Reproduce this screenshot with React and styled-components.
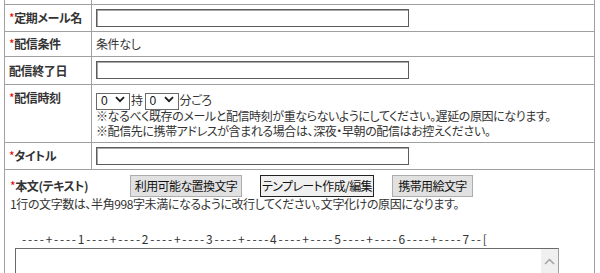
import React from "react";
import styled, { createGlobalStyle } from "styled-components";

const GlobalStyle = createGlobalStyle`
  html, body { background: #fff; }
  body {
    margin: 0 0 0 4px;
    font-family: "Noto Sans CJK JP", "Noto Sans", sans-serif;
    font-size: 12px;
    line-height: 15px;
    color: #333;
    font-feature-settings: "palt";
    letter-spacing: -0.4px;
    overflow: hidden;
  }
`;

const FormTable = styled.table`
  width: 591px;
  border-collapse: collapse;
  table-layout: fixed;
`;

const Row = styled.tr`
  height: ${(p) => p.$h}px;
`;

const Label = styled.th`
  width: 87px;
  box-sizing: border-box;
  border: 1px solid #a0a0a0;
  padding: ${(p) => (p.$top ? "5px 0 0 4px" : "0 0 0 4px")};
  text-align: left;
  vertical-align: ${(p) => (p.$top ? "top" : "middle")};
  font-weight: bold;
  color: #333;
  white-space: nowrap;
`;

const Cell = styled.td`
  border: 1px solid #a0a0a0;
  padding: ${(p) => p.$pad || "0 0 0 4px"};
  vertical-align: ${(p) => (p.$top ? "top" : "middle")};
`;

const Req = styled.span`
  color: #e60000;
  font-weight: normal;
`;

const TextInput = styled.input`
  display: block;
  box-sizing: border-box;
  width: 313px;
  height: ${(p) => p.$h || 18}px;
  margin: 0;
  border: 1px solid #5c5c5c;
  box-shadow: inset 1px 1px 0 #a8a8a8;
  padding: 0 3px;
  font: inherit;
  background: #fff;
`;

const SelectWrap = styled.span`
  position: relative;
  display: inline-block;
  vertical-align: top;
  width: 34px;
  height: 17px;
`;

const Select = styled.select`
  appearance: none;
  box-sizing: border-box;
  width: 34px;
  height: 17px;
  margin: 0;
  padding: 0 0 0 4px;
  border: 1px solid #6a6a6a;
  background: #fff;
  font-family: "Liberation Sans", sans-serif;
  font-size: 12px;
  color: #111;
  line-height: 15px;
`;

const Chevron = styled.svg`
  position: absolute;
  right: 5px;
  top: 5px;
  width: 10px;
  height: 7px;
  pointer-events: none;
`;

const TimeLine = styled.div`
  display: flex;
  align-items: flex-start;
  height: 17px;
  line-height: 17px;
`;

const Unit = styled.span`
  margin: 0 2px 0 1px;
`;

const Note = styled.div`
  line-height: 15px;
  white-space: nowrap;
`;

const BodyHead = styled.div`
  display: flex;
  align-items: center;
  gap: 18px;
  height: 22px;
`;

const BodyLabel = styled.span`
  width: 102px;
  font-weight: bold;
  color: #333;
  white-space: nowrap;
`;

const Button = styled.button`
  box-sizing: border-box;
  height: 22px;
  width: ${(p) => p.$w}px;
  padding: 0;
  margin: 0;
  font-family: inherit;
  font-size: 12px;
  font-feature-settings: "palt";
  letter-spacing: -0.6px;
  color: #111;
  background: ${(p) => (p.$active ? "#f0f0f0" : "#e1e1e1")};
  border: 1px solid ${(p) => (p.$active ? "#222" : "#adadad")};
  white-space: nowrap;
  overflow: hidden;
`;

const Hint = styled.div`
  margin-top: -1px;
  line-height: 15px;
  white-space: nowrap;
`;

const Ruler = styled.div`
  margin: 20px 0 0 12px;
  line-height: 15px;
  letter-spacing: 1.75px;
  color: #333;
  white-space: nowrap;
`;

const EditorBox = styled.div`
  display: flex;
  box-sizing: border-box;
  width: 544px;
  height: 60px;
  margin: 2px 0 0 5px;
  border: 1px solid #6a6a6a;
  border-right-color: #a0a0a0;
`;

const Area = styled.textarea`
  flex: 1;
  border: none;
  outline: none;
  resize: none;
  padding: 2px;
  margin: 0;
  font: inherit;
  overflow: hidden;
`;

const ScrollTrack = styled.div`
  width: 17px;
  background: #f0f0f0;
  display: flex;
  justify-content: center;
  padding-top: 9px;
  box-sizing: border-box;
`;

function TimeSelect() {
  return (
    <SelectWrap>
      <Select defaultValue="0">
        <option value="0">0</option>
      </Select>
      <Chevron viewBox="0 0 10 7">
        <path d="M1 1.2l4 4 4-4" fill="none" stroke="#1a1a1a" strokeWidth="1.8" />
      </Chevron>
    </SelectWrap>
  );
}

export default function App() {
  return (
    <>
      <GlobalStyle />
      <FormTable>
        <tbody>
          <Row $h={4}>
            <Label style={{ borderTop: "none" }} />
            <Cell style={{ borderTop: "none" }} />
          </Row>
          <Row $h={27}>
            <Label>
              <Req>*</Req>定期メール名
            </Label>
            <Cell>
              <TextInput $h={18} />
            </Cell>
          </Row>
          <Row $h={25}>
            <Label>
              <Req>*</Req>配信条件
            </Label>
            <Cell>条件なし</Cell>
          </Row>
          <Row $h={28}>
            <Label>配信終了日</Label>
            <Cell>
              <TextInput $h={18} />
            </Cell>
          </Row>
          <Row $h={58}>
            <Label $top>
              <Req>*</Req>配信時刻
            </Label>
            <Cell $top $pad="6px 0 4px 4px">
              <TimeLine>
                <TimeSelect />
                <Unit>持</Unit>
                <TimeSelect />
                <Unit>分ごろ</Unit>
              </TimeLine>
              <Note>※なるべく既存のメールと配信時刻が重ならないようにしてください。遅延の原因になります。</Note>
              <Note>※配信先に携帯アドレスが含まれる場合は、深夜・早朝の配信はお控えください。</Note>
            </Cell>
          </Row>
          <Row $h={27}>
            <Label>
              <Req>*</Req>タイトル
            </Label>
            <Cell>
              <TextInput $h={18} />
            </Cell>
          </Row>
          <Row>
            <Cell colSpan={2} $top $pad="5px 0 20px 5px">
              <BodyHead>
                <BodyLabel>
                  <Req>*</Req>本文(テキスト)
                </BodyLabel>
                <Button $w={112}>利用可能な置換文字</Button>
                <Button $w={114} $active>
                  テンプレート作成/編集
                </Button>
                <Button $w={81}>携帯用絵文字</Button>
              </BodyHead>
              <Hint>1行の文字数は、半角998字未満になるように改行してください。文字化けの原因になります。</Hint>
              <Ruler>----+----1----+----2----+----3----+----4----+----5----+----6----+----7--[</Ruler>
              <EditorBox>
                <Area />
                <ScrollTrack>
                  <svg width="11" height="7" viewBox="0 0 11 7">
                    <path d="M1 6l4.5-4.5L10 6" fill="none" stroke="#a3a3a3" strokeWidth="1.5" />
                  </svg>
                </ScrollTrack>
              </EditorBox>
            </Cell>
          </Row>
        </tbody>
      </FormTable>
    </>
  );
}
